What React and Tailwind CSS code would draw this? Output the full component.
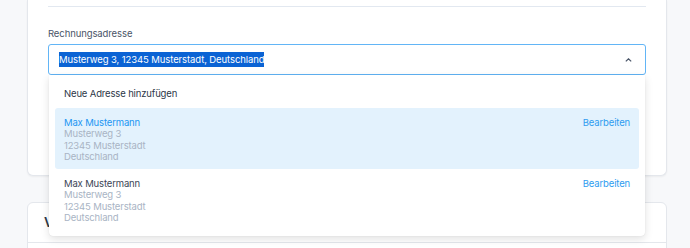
import React from "react";

function Item({ active }) {
  return (
    <div
      className={
        "flex justify-between rounded-[3px] px-[9px] pt-[8.5px] pb-[6.5px] " +
        (active ? "bg-[#e3f2fd]" : "")
      }
    >
      <div className="flex flex-col text-[9.5px] leading-[11.5px] tracking-[-0.15px]">
        <span className={active ? "text-[#2196f3]" : "text-[#3b4556]"}>Max Mustermann</span>
        <span className="text-[#a9b4c4]">Musterweg 3</span>
        <span className="text-[#a9b4c4]">12345 Musterstadt</span>
        <span className="text-[#a9b4c4]">Deutschland</span>
      </div>
      <span className="text-[9.5px] leading-[11.5px] tracking-[-0.15px] text-[#2d9cf0]">Bearbeiten</span>
    </div>
  );
}

export default function App() {
  return (
    <div
      className="w-[690px] h-[248px] overflow-hidden bg-[#f7f8fa] pl-[27px] pr-[23px]"
      style={{ fontFamily: "Inter, 'Noto Sans', sans-serif" }}
    >
      <div className="flex flex-col gap-[26px]">
        <div className="h-[176px] rounded-b-[6px] border-x border-b border-[#e4e7ec] bg-white px-[20px] pt-[6px] shadow-[0_1px_2px_rgba(0,0,0,0.05)]">
          <div className="border-t border-[#e2e8f0]" />
          <div className="mt-[20px] text-[9.5px] leading-[14px] tracking-[-0.1px] text-[#4a5568]">Rechnungsadresse</div>
          <div className="relative mt-[3px]">
            <div className="flex h-[31px] items-center justify-between rounded-[3px] border border-[#62b5f6] pl-[10px] pr-[13px]">
              <span className="bg-[#0b63d4] text-[9.5px] leading-[15px] tracking-[-0.1px] text-white">
                Musterweg 3, 12345 Musterstadt, Deutschland
              </span>
              <svg width="7" height="4" viewBox="0 0 7 4" fill="none">
                <path d="M0.8 3.4L3.5 0.8L6.2 3.4" stroke="#4a5568" strokeWidth="1.2" />
              </svg>
            </div>
            <div className="absolute left-px right-px top-full z-10 h-[161px] rounded-b-[4px] bg-white p-[6px] shadow-[0_3px_8px_rgba(0,0,0,0.12),0_0_1px_rgba(0,0,0,0.15)]">
              <div className="flex h-[27px] items-center px-[9px] text-[9.5px] tracking-[-0.15px] text-[#2d3748]">
                Neue Adresse hinzufügen
              </div>
              <Item active />
              <Item />
            </div>
          </div>
        </div>
        <div className="h-[80px] rounded-t-[6px] border border-[#e4e7ec] bg-white">
          <div className="flex h-[40px] items-center border-b border-[#e4e7ec] px-[16px] text-[13px] font-semibold text-[#2d3748]">
            V
          </div>
        </div>
      </div>
    </div>
  );
}
